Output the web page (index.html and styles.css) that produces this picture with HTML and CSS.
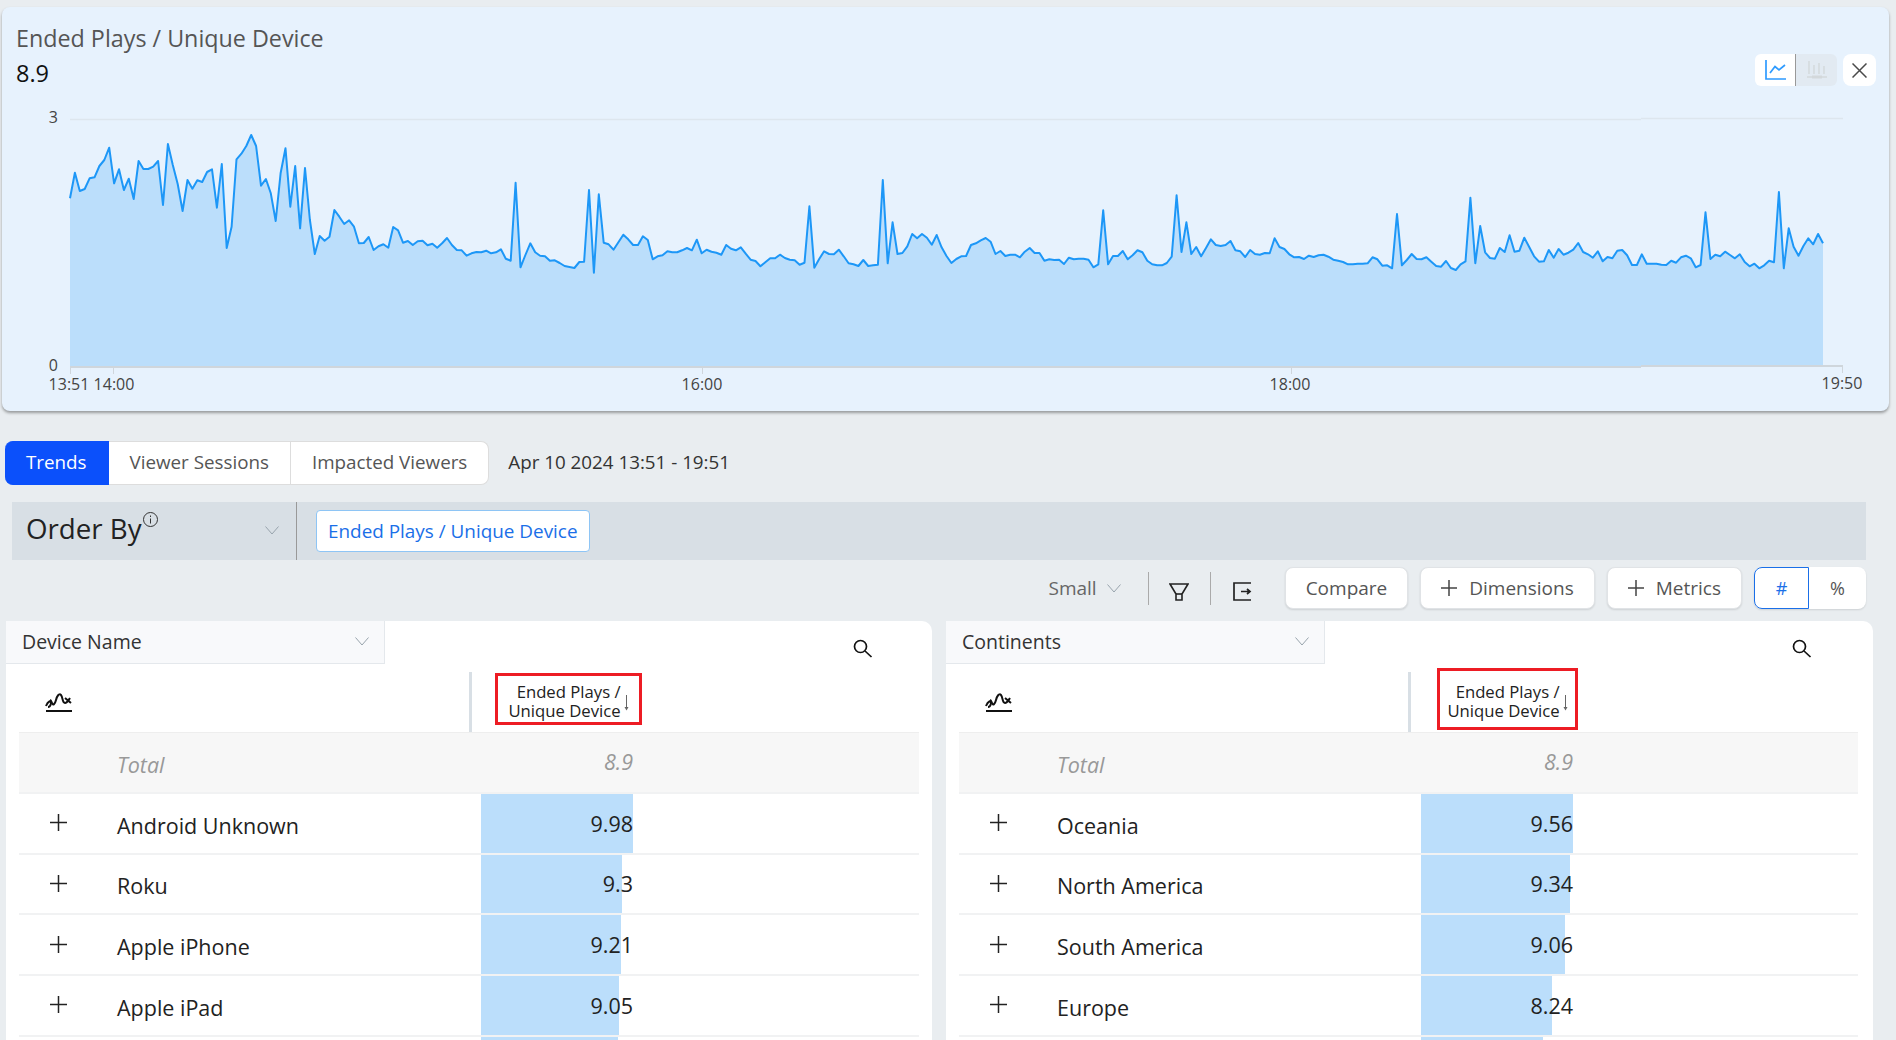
FILE: index.html
```html
<!DOCTYPE html>
<html lang="en">
<head>
    <meta charset="UTF-8">
    <meta name="viewport" content="width=device-width, initial-scale=1.0">
    <title>Ended Plays / Unique Device</title>
    <link rel="stylesheet" href="styles.css">
</head>
<body>
    <section class="chart-card">
        <div class="chart-head">
            <div>
                <h1 class="chart-title">Ended Plays / Unique Device</h1>
                <div class="chart-value">8.9</div>
            </div>
            <div class="chart-tools">
                <button class="tool-btn tool-line">
                    <svg width="21" height="20" viewBox="0 0 21 20" fill="none" stroke="#2e9bff" stroke-width="1.7"><path d="M1 0V19H21"/><path d="M5 13L10 6.5L14 10L20 5"/></svg>
                </button>
                <button class="tool-btn tool-bar">
                    <svg width="20" height="20" viewBox="0 0 20 20" fill="none" stroke="#d3d8db" stroke-width="1.4"><path d="M2 1V14M7 5V14M12 3V14M17 6V14"/><path d="M0 17H20"/><path d="M5 17H15" stroke-width="3"/></svg>
                </button>
                <button class="tool-btn tool-close">
                    <svg width="15" height="15" viewBox="0 0 15 15" fill="none" stroke="#4a4a4a" stroke-width="1.5"><path d="M0.5 0.5L14.5 14.5M14.5 0.5L0.5 14.5"/></svg>
                </button>
            </div>
        </div>
        <svg class="chart-svg" width="1887" height="311" viewBox="2 100 1887 311">
            <path class="grid-line" d="M70 119.5H1641M1641 118.5H1843"/>
            <path id="areaPath" class="area"/>
            <path id="linePath" class="line"/>
            <path class="axis-line" d="M70 367H1641M1641 366H1843"/>
            <path class="axis-tick" d="M70.5 367V374M113.5 367V374M702.5 367V374M1291.5 367V374M1842.5 366V373"/>
            <text class="axis-label" x="58" y="123" text-anchor="end">3</text>
            <text class="axis-label" x="58" y="371" text-anchor="end">0</text>
            <text class="axis-label" x="69" y="390" text-anchor="middle">13:51</text>
            <text class="axis-label" x="114" y="390" text-anchor="middle">14:00</text>
            <text class="axis-label" x="702" y="390" text-anchor="middle">16:00</text>
            <text class="axis-label" x="1290" y="390" text-anchor="middle">18:00</text>
            <text class="axis-label" x="1842" y="389" text-anchor="middle">19:50</text>
        </svg>
    </section>

    <nav class="tabs-row">
        <div class="tabs">
            <span class="tab tab-active">Trends</span>
            <span class="tab">Viewer Sessions</span>
            <span class="tab">Impacted Viewers</span>
        </div>
        <span class="date-range">Apr 10 2024 13:51 - 19:51</span>
    </nav>

    <div class="order-bar">
        <div class="order-select">
            <span class="order-label">Order By</span>
            <svg class="order-info" width="17" height="17" viewBox="0 0 17 17" fill="none" stroke="#333" stroke-width="1"><circle cx="8.5" cy="8.5" r="7"/><path d="M8.5 7.5V12.5M8.5 4.5V6"/></svg>
            <svg class="chevron order-chevron" width="14" height="9" viewBox="0 0 14 9"><path d="M0.5 0.5L7 8L13.5 0.5"/></svg>
        </div>
        <span class="order-chip">Ended Plays / Unique Device</span>
    </div>

    <div class="toolbar">
        <span class="size-select">Small
            <svg class="chevron" width="14" height="9" viewBox="0 0 14 9"><path d="M0.5 0.5L7 8L13.5 0.5"/></svg>
        </span>
        <span class="tool-sep"></span>
        <svg class="tool-icon" width="20" height="18" viewBox="0 0 20 18" fill="none" stroke="#222" stroke-width="1.6"><path d="M1 1H19L13 11V17H7V11Z"/><path d="M7 11H13"/></svg>
        <span class="tool-sep"></span>
        <svg class="tool-icon" width="20" height="19" viewBox="0 0 20 19" fill="none" stroke="#222" stroke-width="1.7"><path d="M18 1H1V18H18"/><path d="M8 9.5H17M14 7L17 9.5L14 12"/></svg>
        <button class="pill">Compare</button>
        <button class="pill">
            <svg width="16" height="16" viewBox="0 0 16 16" stroke="#444" stroke-width="1.5"><path d="M8 0V16M0 8H16"/></svg>
            Dimensions
        </button>
        <button class="pill">
            <svg width="16" height="16" viewBox="0 0 16 16" stroke="#444" stroke-width="1.5"><path d="M8 0V16M0 8H16"/></svg>
            Metrics
        </button>
        <div class="unit-switch">
            <span class="unit unit-active">#</span>
            <span class="unit">%</span>
        </div>
    </div>

    <main class="tables">
        <section class="table-card">
            <div class="table-top">
                <div class="dim-select">
                    <span>Device Name</span>
                    <svg class="chevron" width="14" height="9" viewBox="0 0 14 9"><path d="M0.5 0.5L7 8L13.5 0.5"/></svg>
                </div>
                <svg class="search" width="20" height="19" viewBox="0 0 20 19" fill="none" stroke="#111" stroke-width="1.7"><circle cx="7.5" cy="7.5" r="6"/><path d="M12 12L18.5 18"/></svg>
            </div>
            <div class="thead">
                <div class="spark-cell">
                    <svg width="27" height="20" viewBox="0 0 27 20" fill="none" stroke="#111" stroke-width="2"><path d="M1 14C3 9 6 8 7 11C8 14 10 12 11 8C12 4 14 1 16 3C18 5 17 11 20 11C22 11 23 9 25 6"/><path d="M3 15C6 15 7 9 5 8M20 6L26 11"/><path d="M1 19H27" stroke-width="1.8"/></svg>
                </div>
                <div class="sort-box sort-box-a">
                    <span>Ended Plays /<br>Unique Device</span>
                    <svg class="sort-arrow" width="5" height="16" viewBox="0 0 5 16" fill="none" stroke="#666"><path d="M2.5 0V13"/><path d="M0.5 12L2.5 15.5L4.5 12" fill="#666" stroke="none"/></svg>
                </div>
            </div>
            <div class="row row-total">
                <span class="row-expand"></span>
                <span class="row-name">Total</span>
                <div class="metric"><span class="metric-val">8.9</span></div>
            </div>
            <div class="row">
                <span class="row-expand"><svg class="plus" width="17" height="17" viewBox="0 0 17 17"><path d="M8.5 0V17M0 8.5H17"/></svg></span>
                <span class="row-name">Android Unknown</span>
                <div class="metric"><span class="metric-bar" style="width: 152px"></span><span class="metric-val">9.98</span></div>
            </div>
            <div class="row">
                <span class="row-expand"><svg class="plus" width="17" height="17" viewBox="0 0 17 17"><path d="M8.5 0V17M0 8.5H17"/></svg></span>
                <span class="row-name">Roku</span>
                <div class="metric"><span class="metric-bar" style="width: 141px"></span><span class="metric-val">9.3</span></div>
            </div>
            <div class="row">
                <span class="row-expand"><svg class="plus" width="17" height="17" viewBox="0 0 17 17"><path d="M8.5 0V17M0 8.5H17"/></svg></span>
                <span class="row-name">Apple iPhone</span>
                <div class="metric"><span class="metric-bar" style="width: 140px"></span><span class="metric-val">9.21</span></div>
            </div>
            <div class="row">
                <span class="row-expand"><svg class="plus" width="17" height="17" viewBox="0 0 17 17"><path d="M8.5 0V17M0 8.5H17"/></svg></span>
                <span class="row-name">Apple iPad</span>
                <div class="metric"><span class="metric-bar" style="width: 138px"></span><span class="metric-val">9.05</span></div>
            </div>
            <div class="row">
                <span class="row-expand"></span>
                <span class="row-name"></span>
                <div class="metric"><span class="metric-bar" style="width: 137px"></span></div>
            </div>
        </section>

        <section class="table-card">
            <div class="table-top">
                <div class="dim-select">
                    <span>Continents</span>
                    <svg class="chevron" width="14" height="9" viewBox="0 0 14 9"><path d="M0.5 0.5L7 8L13.5 0.5"/></svg>
                </div>
                <svg class="search" width="20" height="19" viewBox="0 0 20 19" fill="none" stroke="#111" stroke-width="1.7"><circle cx="7.5" cy="7.5" r="6"/><path d="M12 12L18.5 18"/></svg>
            </div>
            <div class="thead">
                <div class="spark-cell">
                    <svg width="27" height="20" viewBox="0 0 27 20" fill="none" stroke="#111" stroke-width="2"><path d="M1 14C3 9 6 8 7 11C8 14 10 12 11 8C12 4 14 1 16 3C18 5 17 11 20 11C22 11 23 9 25 6"/><path d="M3 15C6 15 7 9 5 8M20 6L26 11"/><path d="M1 19H27" stroke-width="1.8"/></svg>
                </div>
                <div class="sort-box sort-box-b">
                    <span>Ended Plays /<br>Unique Device</span>
                    <svg class="sort-arrow" width="5" height="16" viewBox="0 0 5 16" fill="none" stroke="#666"><path d="M2.5 0V13"/><path d="M0.5 12L2.5 15.5L4.5 12" fill="#666" stroke="none"/></svg>
                </div>
            </div>
            <div class="row row-total">
                <span class="row-expand"></span>
                <span class="row-name">Total</span>
                <div class="metric"><span class="metric-val">8.9</span></div>
            </div>
            <div class="row">
                <span class="row-expand"><svg class="plus" width="17" height="17" viewBox="0 0 17 17"><path d="M8.5 0V17M0 8.5H17"/></svg></span>
                <span class="row-name">Oceania</span>
                <div class="metric"><span class="metric-bar" style="width: 152px"></span><span class="metric-val">9.56</span></div>
            </div>
            <div class="row">
                <span class="row-expand"><svg class="plus" width="17" height="17" viewBox="0 0 17 17"><path d="M8.5 0V17M0 8.5H17"/></svg></span>
                <span class="row-name">North America</span>
                <div class="metric"><span class="metric-bar" style="width: 149px"></span><span class="metric-val">9.34</span></div>
            </div>
            <div class="row">
                <span class="row-expand"><svg class="plus" width="17" height="17" viewBox="0 0 17 17"><path d="M8.5 0V17M0 8.5H17"/></svg></span>
                <span class="row-name">South America</span>
                <div class="metric"><span class="metric-bar" style="width: 144px"></span><span class="metric-val">9.06</span></div>
            </div>
            <div class="row">
                <span class="row-expand"><svg class="plus" width="17" height="17" viewBox="0 0 17 17"><path d="M8.5 0V17M0 8.5H17"/></svg></span>
                <span class="row-name">Europe</span>
                <div class="metric"><span class="metric-bar" style="width: 131px"></span><span class="metric-val">8.24</span></div>
            </div>
            <div class="row">
                <span class="row-expand"></span>
                <span class="row-name"></span>
                <div class="metric"><span class="metric-bar" style="width: 122px"></span></div>
            </div>
        </section>
    </main>

    <script src="chart.js"></script>
</body>
</html>
```

FILE: styles.css
```css
* {
    margin: 0;
    padding: 0;
    box-sizing: border-box;
}

html, body {
    height: 1040px;
    overflow: hidden;
}

body {
    font-family: 'Open Sans', 'Noto Sans', sans-serif;
    background: #e9edf0;
    color: #222;
    padding-top: 7px;
}

button {
    font: inherit;
}

/* chart card */
.chart-card {
    width: 1887px;
    height: 404px;
    margin-left: 2px;
    background: #e7f2fd;
    border-radius: 8px;
    box-shadow: 0 2px 3px rgba(0, 0, 0, 0.35);
    overflow: hidden;
}

.chart-head {
    height: 93px;
    padding: 15px 13px 0 14px;
    display: flex;
    justify-content: space-between;
}

.chart-title {
    font-size: 23.3px;
    font-weight: 400;
    line-height: 32px;
    color: #555;
}

.chart-value {
    margin-top: 1px;
    font-size: 23.5px;
    line-height: 36px;
    color: #111;
}

.chart-tools {
    display: flex;
    margin-top: 32px;
    height: 32px;
}

.tool-btn {
    border: none;
    display: flex;
    align-items: center;
    justify-content: center;
    height: 32px;
    background: #fff;
}

.tool-line {
    width: 41px;
    border-radius: 6px 0 0 6px;
    border-right: 1px solid #999;
}

.tool-bar {
    width: 41px;
    background: #e2eaf2;
    border-radius: 0 6px 6px 0;
}

.tool-close {
    width: 33px;
    margin-left: 6px;
    border-radius: 8px;
}

.chart-svg {
    display: block;
}

.grid-line {
    fill: none;
    stroke: #dde6ee;
    stroke-width: 1.5;
}

.area {
    fill: #bbdefb;
}

.line {
    fill: none;
    stroke: #1d97f7;
    stroke-width: 2;
    stroke-linejoin: round;
}

.axis-line {
    fill: none;
    stroke: #cfd6dc;
    stroke-width: 2;
}

.axis-tick {
    stroke: #cfd6dc;
    fill: none;
}

.axis-label {
    font-size: 16px;
    fill: #444;
}

/* tabs */
.tabs-row {
    display: flex;
    align-items: center;
    margin: 30px 0 0 5px;
    height: 44px;
}

.tabs {
    display: flex;
    height: 44px;
    margin-right: 19px;
}

.tab {
    display: flex;
    align-items: center;
    padding: 0 21px 2px;
    font-size: 18.8px;
    color: #555;
    background: #fff;
    border: 1px solid #ddd;
    border-left: none;
}

.tab:last-child {
    border-radius: 0 8px 8px 0;
}

.tab-active {
    background: #0b50fb;
    border-color: #0b50fb;
    border-radius: 8px 0 0 8px;
    color: #fff;
}

.date-range {
    font-size: 18.8px;
    color: #333;
    padding-bottom: 2px;
}

/* order by */
.order-bar {
    display: flex;
    align-items: center;
    width: 1854px;
    height: 58px;
    margin: 17px 0 0 12px;
    background: #d8dfe5;
}

.order-select {
    display: flex;
    align-items: center;
    width: 285px;
    height: 100%;
    padding: 0 0 7px 14px;
    border-right: 1px solid #999;
}

.order-label {
    font-size: 27.7px;
    color: #222;
}

.order-info {
    margin: 0 0 17px 0;
}

.order-chevron {
    margin: 6px 17px 0 auto;
}

.order-chip {
    margin-left: 19px;
    padding: 0 11px;
    height: 42px;
    display: flex;
    align-items: center;
    font-size: 18.9px;
    color: #1a6fe8;
    background: #fff;
    border: 1px solid #8ec5f5;
    border-radius: 4px;
}

.chevron {
    fill: none;
    stroke: #98a3ac;
    stroke-width: 1;
}

/* toolbar */
.toolbar {
    display: flex;
    align-items: center;
    justify-content: flex-end;
    width: 1866px;
    height: 42px;
    margin-top: 7px;
}

.size-select {
    display: flex;
    align-items: center;
    gap: 10px;
    font-size: 19px;
    color: #666;
}

.tool-sep {
    width: 1px;
    height: 33px;
    margin: 0 20px 0 27px;
    background: #aaa;
}

.tool-sep + .tool-icon + .tool-sep {
    margin: 0 22px 0 21px;
}

.tool-icon {
    margin-top: 7px;
}

.pill {
    display: flex;
    align-items: center;
    gap: 12px;
    height: 42px;
    margin-left: 12px;
    padding: 0 20px;
    font-size: 19px;
    color: #555;
    background: #fff;
    border: 1px solid #e0e3e6;
    border-radius: 8px;
    box-shadow: 0 1px 2px rgba(0, 0, 0, 0.12);
}

.toolbar > svg + .pill {
    margin-left: 32px;
}

.unit-switch {
    display: flex;
    height: 42px;
    margin-left: 12px;
    background: #fff;
    border-radius: 8px;
    box-shadow: 0 1px 2px rgba(0, 0, 0, 0.12);
}

.unit {
    display: flex;
    align-items: center;
    justify-content: center;
    width: 57px;
    font-size: 18px;
    color: #555;
}

.unit-active {
    width: 55px;
    color: #1a6fe8;
    border: 1px solid #1a6fe8;
    border-radius: 8px 0 0 8px;
}

/* tables */
.tables {
    display: grid;
    grid-template-columns: 926px 927px;
    gap: 14px;
    margin: 12px 0 0 6px;
}

.table-card {
    height: 419px;
    overflow: hidden;
    background: #fff;
    border-radius: 0 10px 0 0;
    padding: 0 13px;
}

.table-card + .table-card {
    padding-right: 15px;
}

.table-top {
    display: flex;
    align-items: flex-start;
    justify-content: space-between;
    height: 43px;
    margin: 0 0 8px -13px;
}

.dim-select {
    display: flex;
    align-items: center;
    justify-content: space-between;
    width: 379px;
    height: 43px;
    padding: 0 15px 2px 16px;
    font-size: 19.5px;
    color: #333;
    background: #f8f9fb;
    border: solid #e4e8ec;
    border-width: 0 1px 1px 0;
}

.search {
    margin: 18px 46px 0 0;
}

.thead {
    display: flex;
    height: 61px;
    border-bottom: 1px solid #eee;
}

.spark-cell {
    display: flex;
    align-items: center;
    width: 453px;
    padding-left: 26px;
    border-right: 3px solid #d8dfe5;
}

.table-card + .table-card .spark-cell {
    width: 452px;
}

.sort-box {
    display: flex;
    align-items: center;
    justify-content: center;
    gap: 3px;
    padding-top: 4px;
    font-size: 16.7px;
    line-height: 19px;
    text-align: right;
    color: #222;
    border: 3px solid #ed1c24;
}

.sort-box-a {
    width: 147px;
    height: 52px;
    margin: 1px 0 0 23px;
}

.sort-box-b {
    width: 141px;
    height: 62px;
    margin: -4px 0 0 26px;
}

.sort-arrow {
    margin-top: 4px;
}

.row {
    display: flex;
    height: 60.75px;
    border-bottom: 2px solid #f1f2f3;
}

.row-total {
    background: #f7f7f7;
    color: #999;
    font-style: italic;
}

.row-total .metric-val {
    margin-bottom: 2px;
}

.row-expand {
    display: flex;
    align-items: center;
    justify-content: center;
    width: 78px;
    padding-bottom: 1px;
}

.plus {
    stroke: #222;
    stroke-width: 1.5;
}

.row-name {
    display: flex;
    align-items: center;
    width: 384px;
    padding: 4px 0 0 20px;
    font-size: 21.5px;
}

.metric {
    display: grid;
    width: 152px;
}

.metric-bar {
    grid-area: 1 / 1;
    background: #bbdefb;
}

.metric-val {
    grid-area: 1 / 1;
    align-self: center;
    text-align: right;
    font-size: 21.5px;
}
```

FILE: chart.js
```js
// sampled once a minute, values read off the plot as pixel rows (3 rows = 1px)
const segments = [
    { top: 110, rows: [
        265, 188, 243, 237, 205, 202, 168, 150, 113, 220, 178, 240, 206, 267, 153, 177, 177, 170, 153, 285,
        102, 165, 222, 303, 210, 236, 211, 216, 186, 178, 293, 162, 414, 350, 148, 131, 108, 75, 108, 227,
        207, 250, 333, 190, 115, 290, 168, 355, 174, 330, 432, 378, 392, 380, 300, 320, 342, 331, 350, 400,
        399, 381, 420, 409, 403, 413, 351, 361, 398, 393, 405, 394, 392, 406, 401, 413, 400, 384, 405, 420,
        421, 437
    ] },
    { top: 160, rows: [
        280, 276, 277, 272, 280, 277, 268, 296, 302, 68, 322, 285, 250, 277, 287, 289, 302, 301, 309, 318,
        321, 324, 306, 305, 90, 338, 103, 248, 253, 269, 247, 224, 238, 255, 255, 229, 240, 298, 289, 286,
        274, 277, 277, 271, 264, 271, 239, 280, 269, 275, 278, 284, 255, 266, 271, 262, 281, 299, 303, 319,
        307, 295, 295, 284, 294, 299, 301, 314, 308, 139, 323, 297, 274, 282, 283, 269, 289, 310, 313, 318,
        300, 318, 316, 314, 60, 310,
        187, 282, 279, 259, 222, 235, 222, 233, 254, 225, 262, 288, 309, 297, 289, 288, 255, 250, 241, 234,
        245, 282, 273, 288, 284, 284, 292, 275, 264, 279, 279, 302, 298, 300, 299, 312, 293, 298, 296, 296,
        299, 322, 313, 151, 313, 288, 288, 273, 298, 286, 271, 277, 302, 313, 316, 316, 309, 290, 106, 276,
        187, 282, 261, 289, 264, 238, 255, 258, 255, 243, 271, 274, 291, 270, 282, 284, 279, 280, 235, 261,
        267, 283, 292, 291, 297, 287,
        291, 286, 284, 290, 299, 302, 306, 313, 313, 311, 311, 310, 292, 298, 317, 316, 325, 162, 316, 300,
        282, 297, 298, 292, 305, 318, 320, 303, 324, 330, 313, 304, 113, 310, 198, 277, 294, 296, 264, 276,
        226, 275, 272, 233, 261, 289, 305, 304, 270, 293, 267, 284, 278, 269, 249, 276, 283, 293, 274, 304,
        291, 295, 272, 270, 286, 315, 315, 283, 311, 311, 311, 314, 315, 302, 308, 292, 287, 295, 322, 315,
        157, 297, 284, 289, 275, 285, 295, 283, 306, 319, 311, 325, 316, 302, 307, 96, 325, 205, 260, 287,
        258, 235, 253, 222, 250
    ] }
];

const startX = 70;
const endX = 1823;
const baseY = 366;

const ys = segments.flatMap(s => s.rows.map(r => s.top + r / 3));
const step = (endX - startX) / (ys.length - 1);
const points = ys.map((y, i) => `${(startX + i * step).toFixed(1)} ${y.toFixed(1)}`);

document.getElementById('linePath').setAttribute('d', 'M' + points.join('L'));
document.getElementById('areaPath').setAttribute('d', `M${startX} ${baseY}L` + points.join('L') + `L${endX} ${baseY}Z`);
```
